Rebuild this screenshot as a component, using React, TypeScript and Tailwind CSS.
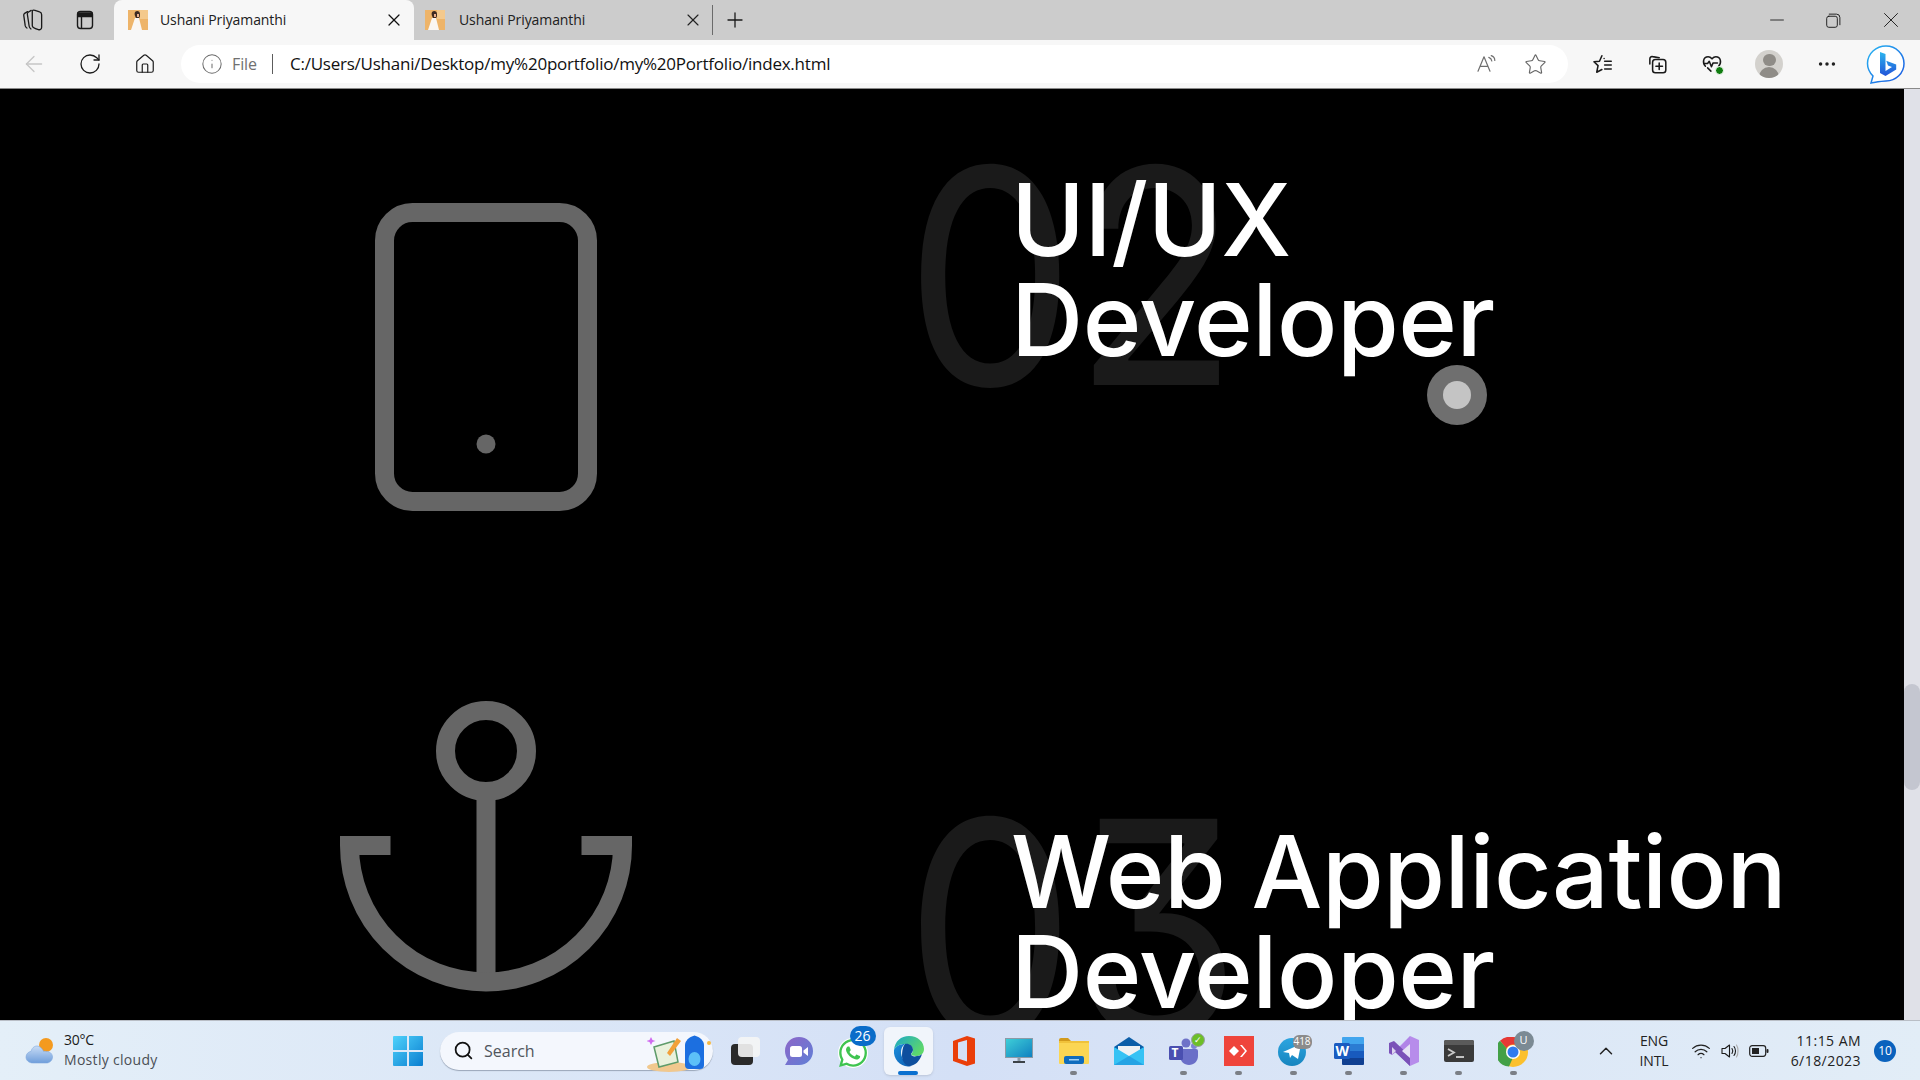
import React from "react";
import { ArrowLeft, RotateCw, Home, Info, Star, Plus, X, Minus, ChevronUp, Wifi, MoreHorizontal, Search } from "lucide-react";
import { SiWhatsapp } from "react-icons/si";

const Favicon = () => (
  <svg width="20" height="20" viewBox="0 0 20 20" className="shrink-0">
    <rect width="20" height="20" fill="#eeb469" />
    <rect x="12" width="8" height="9" fill="#f4c98c" />
    <path d="M7 2c2-2 5-1 5 2 0 2 0 3-1 4l-3 0C7 6 6 4 7 2z" fill="#3d2a22" />
    <path d="M9 4h2v3H9z" fill="#e9b08c" />
    <path d="M7 8h4l3 12H3z" fill="#faf6f2" />
  </svg>
);

const Slot = ({ className, children }: { className: string; children?: React.ReactNode }) => (
  <div className={`flex items-center justify-center shrink-0 ${className}`}>{children}</div>
);

const S = ({ children, size = 20, stroke = "#1a1a1a", sw = 1.2 }: { children: React.ReactNode; size?: number; stroke?: string; sw?: number }) => (
  <svg width={size} height={size} viewBox="0 0 20 20" fill="none" stroke={stroke} strokeWidth={sw} strokeLinecap="round" strokeLinejoin="round">
    {children}
  </svg>
);

const TabBar = () => (
  <div className="flex h-10 bg-[#cccccc] shrink-0 items-stretch">
    <Slot className="w-[64px] pl-[2px]">
      <S size={24} sw={1.1}>
        <path d="M5.500 3 3 4.500c-.6.4-.8 1-.7 1.700l1.200 8.500c.2 1 .6 1.500 1.400 2" />
        <path d="M8.500 2 6 3.500c-.6.4-.8 1-.7 1.700l1.500 10c.2 1.200.7 1.800 1.500 2.300" />
        <path d="M11 1.800l4.500 1.500c1 .3 1.700 1.200 1.700 2.300V16c0 1.500-1.200 2.500-2.700 2-2-.6-3.300-1.200-4.200-1.800-.6-.4-.9-1-.9-1.700V3c0-.9.800-1.500 1.600-1.200z" />
      </S>
    </Slot>
    <Slot className="w-[42px]">
      <S size={20} sw={1.4}>
        <rect x="2.500" y="1.500" width="15" height="17" rx="3" />
        <path d="M3 3h14v3.500H3z" fill="#1a1a1a" />
        <path d="M6.500 6.500v11.500" />
      </S>
    </Slot>
    <div className="w-[8px]" />
    <div className="w-[300px] bg-[#f7f7f7] rounded-t-lg flex items-center pl-[14px] pr-[10px]">
      <Favicon />
      <span className="ml-3 flex-1 text-[14px] text-[#202020] font-['Open_Sans',sans-serif] tracking-[-0.1px] -mt-[2px]">Ushani Priyamanthi</span>
      <X size={20} color="#111" strokeWidth={1.5} />
    </div>
    <div className="w-[298px] flex items-center pl-[11px] pr-[9px]">
      <Favicon />
      <span className="ml-[14px] flex-1 text-[14px] text-[#202020] font-['Open_Sans',sans-serif] tracking-[-0.1px] -mt-[2px]">Ushani Priyamanthi</span>
      <X size={20} color="#222" strokeWidth={1.4} />
    </div>
    <div className="w-px h-[30px] bg-[#6b6b6b] self-center" />
    <Slot className="w-[44px]"><Plus size={24} color="#1a1a1a" strokeWidth={1.3} /></Slot>
    <div className="flex-1" />
    <Slot className="w-[57px]"><Minus size={22} color="#222" strokeWidth={1} /></Slot>
    <Slot className="w-[57px]">
      <S size={17} sw={1.1}>
        <rect x="2" y="5" width="12.500" height="13" rx="2.500" />
        <path d="M5 2.500h8.500a4 4 0 0 1 4 4v8.500" />
      </S>
    </Slot>
    <Slot className="w-[58px]"><X size={26} color="#222" strokeWidth={0.9} /></Slot>
  </div>
);

const Bing = () => (
  <svg width="40" height="40" viewBox="0 0 40 40">
    <defs>
      <linearGradient id="bg1" x1="0" y1="0" x2="1" y2="1"><stop offset="0" stopColor="#27b6f2" /><stop offset="1" stopColor="#1a56e0" /></linearGradient>
      <linearGradient id="bg2" x1="0" y1="0" x2="0" y2="1"><stop offset="0" stopColor="#2cb5ee" /><stop offset="1" stopColor="#2253d8" /></linearGradient>
    </defs>
    <path d="M20 2c10 0 18 8 18 17.500S30 37 20 37c-4 0-9 1-15 2l2-7C3 28 1.500 24 1.500 19.500 1.500 9.500 10 2 20 2z" fill="#fff" stroke="url(#bg1)" strokeWidth="1.500" />
    <path d="M14 8l5.500 2v17l6.500-4-4-1.500-1.800-4.800 10 3.800v5L19.500 32 14 29z" fill="url(#bg2)" />
  </svg>
);

const AddressBar = () => (
  <div className="flex h-[49px] shrink-0 items-center bg-[#f7f7f7] border-b border-[#8a8a8a] pl-[6px]">
    <Slot className="w-[56px]"><ArrowLeft size={26} color="#c6c6c6" strokeWidth={1.2} /></Slot>
    <Slot className="w-[55px]"><RotateCw size={24} color="#1c1c1c" strokeWidth={1.3} /></Slot>
    <Slot className="w-[55px]"><Home size={22} color="#1c1c1c" strokeWidth={1.3} /></Slot>
    <div className="ml-[9px] w-[1387px] h-[38px] rounded-full bg-white flex items-center pl-[20px] shrink-0">
      <Info size={22} color="#6b6b6b" strokeWidth={1.1} />
      <span className="ml-[9px] text-[16px] text-[#707070] font-['Open_Sans',sans-serif] tracking-[-0.1px]">File</span>
      <div className="ml-[15px] w-px h-[20px] bg-[#5c5c5c]" />
      <span className="ml-[17px] text-[17px] text-[#111] font-['Open_Sans',sans-serif] tracking-[-0.23px] whitespace-nowrap">C:/Users/Ushani/Desktop/my%20portfolio/my%20Portfolio/index.html</span>
      <div className="flex-1" />
      <S size={24} stroke="#6f6f6f" sw={1}>
        <path d="M2.500 16 7.500 4l5 12M4.500 12h6" />
        <path d="M11.500 4.500c1.500.5 2.300 1.500 2.500 3M13.500 3c1.500.5 3 2 3 4" />
      </S>
      <div className="ml-[25px] mr-[21px]"><Star size={23} color="#666" strokeWidth={1.2} /></div>
    </div>
    <Slot className="w-[55px] ml-[7px]">
      <S size={22} sw={1.4}>
        <path d="M9 2.500 6.800 7.500l-5 .5L5.500 11.500l-1.200 6 4.700-2.500M11 5h0M11.500 7.500h6M11.500 11h6M11.500 14.500h6" />
      </S>
    </Slot>
    <Slot className="w-[54px]">
      <S size={22} sw={1.4}>
        <path d="M3.500 10V5.500c0-1.500 1-2.500 2.500-2.200l6 1" />
        <rect x="6" y="6" width="12" height="12" rx="2.500" />
        <path d="M12 9v6M9 12h6" />
      </S>
    </Slot>
    <Slot className="w-[55px] relative">
      <S size={22} sw={1.4}>
        <path d="M4 12C1 9 2 3.500 6.500 3.500c1.500 0 2.500.7 3.500 1.800 1-1.100 2-1.800 3.500-1.800 4.500 0 5.500 5.500 2.500 8.500" />
        <path d="M2.500 9.500h3.500l1.500-2 2 5 1.500-3.500h3l1 0M6 13.500l3 3" />
      </S>
      <div className="absolute left-[31px] top-[13px] w-[9px] h-[9px] rounded-full bg-[#107c10] border border-white" />
    </Slot>
    <Slot className="w-[60px]">
      <div className="w-7 h-7 rounded-full bg-[#d3d1cd] flex flex-col items-center overflow-hidden">
        <div className="w-[13px] h-[13px] rounded-full bg-[#8f8c87] mt-[4px]" />
        <div className="w-[20px] h-[12px] rounded-t-full bg-[#8f8c87] mt-[1px]" />
      </div>
    </Slot>
    <Slot className="w-[56px]"><MoreHorizontal size={22} color="#222" strokeWidth={1.8} /></Slot>
    <Slot className="w-[62px]"><Bing /></Slot>
  </div>
);

const PhoneIcon = () => (
  <svg width="222" height="308" viewBox="0 0 222 308" className="ml-[375px] shrink-0">
    <rect x="9.500" y="9.500" width="203" height="289" rx="28" fill="none" stroke="#666" strokeWidth="19" />
    <circle cx="111" cy="241" r="9.500" fill="#666" />
  </svg>
);

const AnchorIcon = () => (
  <svg width="292" height="292" viewBox="0 0 292 292" className="ml-[340px] mt-[189px] shrink-0">
    <g fill="none" stroke="#666" strokeWidth="19">
      <circle cx="146" cy="51" r="40.500" />
      <path d="M146 91V282" />
      <path d="M50.500 145.500H9.500a136.500 136.500 0 0 0 273 0H241.500" />
    </g>
  </svg>
);

const Service = ({ num, lines }: { num: string; lines: string[] }) => (
  <div className="relative h-[652px] shrink-0 pl-[111px] pt-[81px]">
    <div className="absolute left-[5px] -top-[1px] origin-left scale-x-[0.9] text-[300px] leading-[1.25] text-[#1a1a1a] font-['Inter',sans-serif] font-normal tracking-[-2px] [font-feature-settings:'cv09'] select-none">{num}</div>
    <div className="relative text-[100px] leading-[100px] text-white font-['Inter',sans-serif] font-medium tracking-[-0.5px] whitespace-nowrap">
      {lines.map((l) => <div key={l}>{l}</div>)}
    </div>
  </div>
);

const Main = () => (
  <div className="flex-1 min-h-0 flex">
    <div className="relative flex-1 bg-black overflow-hidden flex">
      <div className="w-[900px] shrink-0 pt-[114px] flex flex-col">
        <PhoneIcon />
        <AnchorIcon />
      </div>
      <div className="flex-1 flex flex-col">
        <Service num="02" lines={["UI/UX", "Developer"]} />
        <Service num="03" lines={["Web Application", "Developer"]} />
      </div>
      <div className="absolute left-[1427px] top-[276px] w-[60px] h-[60px] rounded-full bg-[#6f6f6f] flex items-center justify-center">
        <div className="w-7 h-7 rounded-full bg-[#c4c4c4]" />
      </div>
    </div>
    <div className="w-4 shrink-0 bg-[#e0e1e8] pt-[595px]">
      <div className="h-[106px] rounded-lg bg-[#c4c6d0]" />
    </div>
  </div>
);

const TaskSlot = ({ children, dot, active }: { children: React.ReactNode; dot?: boolean; active?: boolean }) => (
  <div className="relative w-[55px] h-[60px] shrink-0 flex items-center justify-center">
    {active && <div className="absolute left-[3px] top-[6px] w-[49px] h-[48px] rounded-md bg-[#f1f5fb] shadow-sm" />}
    <div className="relative">{children}</div>
    {dot && <div className="absolute left-[24px] top-[50px] w-[7px] h-[4px] rounded-full bg-[#7b7f86]" />}
    {active && <div className="absolute left-[17px] top-[50px] w-5 h-1 rounded-full bg-[#0a70d0]" />}
  </div>
);

const Badge = ({ className, children }: { className: string; children: React.ReactNode }) => (
  <div className={`absolute flex items-center justify-center rounded-full text-white font-['Open_Sans',sans-serif] ${className}`}>{children}</div>
);

const Taskbar = () => (
  <div className="h-[60px] shrink-0 flex items-center border-t border-[#b9bec6] bg-gradient-to-r from-[#e4eff8] via-[#d4e0f6] to-[#e2edf7]">
    <div className="w-[386px] shrink-0 flex items-center pl-[25px]">
      <svg width="32" height="30" viewBox="0 0 32 30">
        <defs><linearGradient id="cl" x1="0" y1="0" x2="0" y2="1"><stop offset="0" stopColor="#c8dcf5" /><stop offset="1" stopColor="#6f9edb" /></linearGradient></defs>
        <circle cx="21" cy="9" r="7" fill="#f49a1f" />
        <path d="M8 27c-4 0-7-2.500-7-6 0-3 2.500-5.500 5-5.500C7 11 11 9 14 10.500c2.500 1 4 3 4.500 5 .5 0 1.500-.5 3 0 3 0 6 2 6 5.500s-3 6-6 6z" fill="url(#cl)" stroke="#7fa8de" strokeWidth=".6" />
      </svg>
      <div className="ml-[7px] font-['Open_Sans',sans-serif] text-[14px] leading-[20px] -mt-[2px]">
        <div className="text-[#1a1a1a] tracking-[-0.25px]">30°C</div>
        <div className="text-[#4b4f55] tracking-[0.3px]">Mostly cloudy</div>
      </div>
    </div>
    <Slot className="w-[44px]">
      <svg width="30" height="30" viewBox="0 0 30 30">
        <defs><linearGradient id="wn" x1="0" y1="0" x2="1" y2="1"><stop offset="0" stopColor="#4fd2fb" /><stop offset="1" stopColor="#0a7ed0" /></linearGradient></defs>
        <path d="M0 1a1 1 0 0 1 1-1h13v14H0zM16 0h13a1 1 0 0 1 1 1v13H16zM0 16h14v14H1a1 1 0 0 1-1-1zM16 16h14v13a1 1 0 0 1-1 1H16z" fill="url(#wn)" />
      </svg>
    </Slot>
    <div className="ml-[10px] w-[273px] h-[38px] rounded-full bg-[#f4f7fd] shadow-[0_1px_1px_#9aa6b8] flex items-center pl-[13px] relative shrink-0">
      <Search size={21} color="#111" strokeWidth={2} />
      <span className="ml-[10px] text-[16px] text-[#50555c] font-['Open_Sans',sans-serif] tracking-[0px]">Search</span>
      <svg width="66" height="44" viewBox="0 0 66 44" className="absolute right-0 -top-[3px]">
        <path d="M4 8l1.500 3 3 1-3 1L4 16l-1.500-3-3-1 3-1z" fill="#d06bf0" />
        <ellipse cx="22" cy="38" rx="22" ry="5" fill="#f1c88e" />
        <path d="M7 18l20-6 4 21-19 5z" fill="#e9f1dc" stroke="#5e9b6a" strokeWidth="1.500" />
        <path d="M20 24 30 9l4 3-11 15z" fill="#f2a13a" />
        <path d="M38 16c0-4 4-8 9.500-9.500C53 8 57 12 57 16v20a4 4 0 0 1-4 4H42a4 4 0 0 1-4-4z" fill="#1c6fe0" />
        <ellipse cx="47.500" cy="30" rx="6" ry="7" fill="#5cc0f8" />
        <circle cx="62" cy="14" r="2" fill="#f5b942" />
      </svg>
    </div>
    <div className="ml-[3px] flex shrink-0">
      <TaskSlot>
        <div className="relative w-[30px] h-[28px] ml-[4px]">
          <div className="absolute left-0 top-[7px] w-[22px] h-[21px] rounded-sm bg-[#2a2a2a]" />
          <div className="absolute left-[7px] top-0 w-[22px] h-[20px] rounded-sm bg-[#f5f5f5] opacity-90" />
        </div>
      </TaskSlot>
      <TaskSlot>
        <svg width="30" height="30" viewBox="0 0 30 30">
          <defs><linearGradient id="ch" x1="0" y1="0" x2="1" y2="1"><stop offset="0" stopColor="#8d66c8" /><stop offset="1" stopColor="#5f7fd6" /></linearGradient></defs>
          <path d="M15 1c8 0 14 6 14 14s-6 14-14 14H1l3-5C2 21 1 18 1 15 1 7 7 1 15 1z" fill="url(#ch)" />
          <rect x="6" y="10" width="12" height="11" rx="2.500" fill="#fff" />
          <path d="M19.500 14.500 24 11v9l-4.500-3.500z" fill="#fff" />
        </svg>
      </TaskSlot>
      <TaskSlot>
        <div className="relative w-[30px] h-[30px] rounded-full bg-white flex items-center justify-center mt-[4px] -ml-[2px]">
          <SiWhatsapp size={28} color="#3fc450" />
          <Badge className="left-[12px] -top-[12px] w-[26px] h-[20px] bg-[#0a6cc9] text-[14px]">26</Badge>
        </div>
      </TaskSlot>
      <TaskSlot active>
        <svg width="32" height="32" viewBox="0 0 32 32">
          <defs>
            <linearGradient id="ed1" x1="0" y1="0" x2="1" y2=".6"><stop offset="0" stopColor="#1aa7c8" /><stop offset="1" stopColor="#5fd86a" /></linearGradient>
            <linearGradient id="ed2" x1="0" y1="0" x2="1" y2="1"><stop offset="0" stopColor="#1c8fdc" /><stop offset="1" stopColor="#0c5bb0" /></linearGradient>
          </defs>
          <path d="M1 15C2 6 8 1 16 1c9 0 15 6 15 13 0 5-4 7-8 7-3 0-5-1-5-2 1-1 2-2 2-4 0-4-4-6-8-6-5 0-9 2-11 6z" fill="url(#ed1)" />
          <path d="M1 15c2-4 6-6 11-6-4 3-5 8-3 13 1 3 5 7 10 9-1 0-2 .5-4 .5C7 31 0 24 1 15z" fill="url(#ed2)" />
          <path d="M12 9c3-1 8 1 8 6 0 2-2 3-2 4 0 2 3 3 6 2 2 0 4-1 5-2-2 7-7 12-13 12-4-1-7-5-7-10 0-5 1-10 3-12z" fill="#0e4f9e" />
        </svg>
      </TaskSlot>
      <TaskSlot>
        <svg width="24" height="30" viewBox="0 0 24 30">
          <path d="M1 5 15 0l8 2.500v25L15 30 1 25zM15 4 6 6.500v16l9 3z" fill="#ea3e09" fillRule="evenodd" />
        </svg>
      </TaskSlot>
      <TaskSlot>
        <svg width="28" height="26" viewBox="0 0 28 26">
          <defs><linearGradient id="mo" x1="0" y1="0" x2="1" y2="1"><stop offset="0" stopColor="#3fd0d8" /><stop offset="1" stopColor="#0f7fc0" /></linearGradient></defs>
          <rect x=".5" y=".5" width="27" height="19" fill="url(#mo)" stroke="#8c9aa6" />
          <rect x="12.500" y="20" width="3" height="3" fill="#8c9aa6" />
          <rect x="8" y="23" width="12" height="2" fill="#3c4248" />
        </svg>
      </TaskSlot>
      <TaskSlot dot>
        <svg width="30" height="26" viewBox="0 0 30 26">
          <path d="M0 2a2 2 0 0 1 2-2h7l3 3h-12z" fill="#d29a1c" />
          <rect y="3" width="30" height="23" rx="1" fill="#fbd653" />
          <rect y="3" width="30" height="2" fill="#f0c23a" />
          <rect x="5" y="18" width="20" height="8" rx="2" fill="#0f6cbd" />
          <rect x="10" y="21" width="10" height="1.500" fill="#9fd0f5" />
        </svg>
      </TaskSlot>
      <TaskSlot>
        <svg width="30" height="28" viewBox="0 0 30 28">
          <path d="M0 10 15 0l15 10v18H0z" fill="#0c5ea8" />
          <path d="M4 9h22v6L15 20 4 15z" fill="#eef1f4" />
          <path d="M0 10l15 9 15-9v18H0z" fill="#36c2f4" />
          <path d="M0 28l15-9 15 9z" fill="#1a8ed8" opacity=".6" />
        </svg>
      </TaskSlot>
      <TaskSlot dot>
        <div className="relative">
          <svg width="30" height="28" viewBox="0 0 30 28">
            <circle cx="17" cy="6" r="4.500" fill="#6e72c8" />
            <circle cx="25" cy="9" r="3" fill="#7b83d6" />
            <path d="M11 12h16a2 2 0 0 1 2 2v5c0 5-4 9-9 9s-9-4-9-9z" fill="#6a6fc8" />
            <rect y="9" width="14" height="14" rx="1.500" fill="#4a4fb0" />
          </svg>
          <span className="absolute left-[3px] top-[9px] text-[12px] leading-[14px] text-white font-bold font-['Open_Sans',sans-serif]">T</span>
          <Badge className="left-[22px] -top-[4px] w-[14px] h-[14px] bg-[#6cbf28] border border-[#9aa0a8] text-[9px]">✓</Badge>
        </div>
      </TaskSlot>
      <TaskSlot dot>
        <div className="w-[30px] h-[30px] bg-[#ef443b] flex items-center justify-center">
          <svg width="20" height="12" viewBox="0 0 20 12">
            <path d="M0 6l5-5 5 5-5 5z" fill="#fff" />
            <path d="M11 0h2l5 6-5 6h-2l5-6z" fill="#fff" />
          </svg>
        </div>
      </TaskSlot>
      <TaskSlot dot>
        <div className="relative w-[28px] h-[28px] rounded-full bg-gradient-to-b from-[#2ca5e0] to-[#1785bf] flex items-center justify-center -ml-[4px] mt-[2px]">
          <svg width="18" height="16" viewBox="0 0 18 16"><path d="M0 8 18 0l-3 15-6-4-2 3-1-5z" fill="#fff" /></svg>
          <Badge className="left-[15px] -top-[3px] !rounded-md w-[19px] h-[14px] bg-[#8b8b8b] text-[10px]">418</Badge>
        </div>
      </TaskSlot>
      <TaskSlot dot>
        <div className="relative">
          <svg width="30" height="28" viewBox="0 0 30 28">
            <path d="M8 1a1 1 0 0 1 1-1h20a1 1 0 0 1 1 1v6H8z" fill="#41a5ee" />
            <rect x="8" y="7" width="22" height="7" fill="#2b7cd3" />
            <rect x="8" y="14" width="22" height="7" fill="#185abd" />
            <path d="M8 21h22v6a1 1 0 0 1-1 1H9a1 1 0 0 1-1-1z" fill="#103f91" />
            <rect y="6" width="16" height="16" rx="1.500" fill="#1a5bc0" />
          </svg>
          <span className="absolute left-[2px] top-[6px] text-[14px] leading-[16px] text-white font-bold font-['Open_Sans',sans-serif]">W</span>
        </div>
      </TaskSlot>
      <TaskSlot dot>
        <svg width="30" height="30" viewBox="0 0 30 30">
          <path d="M21 0l9 4v22l-9 4L7 16l-4 3-3-1.500v-5L3 11l4 3z" fill="#b78ceb" />
          <path d="M21 0v30L7 16z" fill="#a677e0" opacity=".4" />
          <path d="M0 7l5-2 16 15v10L6 16l-3 2.500-3-1.500z" fill="#7a52b8" />
          <path d="M21 8 13 15l8 7z" fill="#e4e2f5" />
          <path d="M3 11l4 4-4 3.500z" fill="#dcd6ee" />
        </svg>
      </TaskSlot>
      <TaskSlot dot>
        <svg width="30" height="22" viewBox="0 0 30 22">
          <rect width="30" height="22" rx="2" fill="#3a3a3a" />
          <path d="M0 2a2 2 0 0 1 2-2h26a2 2 0 0 1 2 2v3H0z" fill="#5a5a5a" />
          <path d="M4 9l6 3.500-6 3.500" fill="none" stroke="#c9c9c9" strokeWidth="1.800" />
          <path d="M12 17h8" stroke="#e5e5e5" strokeWidth="1.600" />
        </svg>
      </TaskSlot>
      <TaskSlot dot>
        <div className="relative -ml-[2px] mt-[2px]">
          <svg width="30" height="30" viewBox="0 0 30 30">
            <circle cx="15" cy="15" r="15" fill="#fbc02d" />
            <path d="M15 0a15 15 0 0 1 13 7.500H15a7.500 7.500 0 0 0-6.500 3.800L2 3.800A15 15 0 0 1 15 0z" fill="#e53935" transform="translate(0 0)" />
            <path d="M2 3.800A15 15 0 0 0 11 29.500l4-9A7.500 7.500 0 0 1 8.500 11.300z" fill="#43a047" />
            <circle cx="15" cy="15" r="7" fill="#fff" />
            <circle cx="15" cy="15" r="5.500" fill="#2f7bf0" />
          </svg>
          <Badge className="left-[16px] -top-[6px] w-5 h-5 bg-[#7b8a94] text-[11px]">U</Badge>
        </div>
      </TaskSlot>
    </div>
    <Slot className="w-[42px] ml-[44px]"><ChevronUp size={22} color="#222" strokeWidth={1.6} /></Slot>
    <div className="w-[48px] ml-[3px] text-center text-[14px] leading-[20px] text-[#222] font-['Open_Sans',sans-serif] tracking-[-0.1px] shrink-0">
      <div>ENG</div>
      <div>INTL</div>
    </div>
    <Slot className="w-[30px] ml-[8px]"><Wifi size={20} color="#222" strokeWidth={1.5} /></Slot>
    <Slot className="w-[28px]">
      <S size={20} sw={1.1}>
        <path d="M2 7.500v5h3l4.500 3.500V4L5 7.500zM12 7.500c1 1.500 1 3.500 0 5M14 5.500c2 2.500 2 6.500 0 9" />
        <path d="M16.500 4c2 3 2 9 0 12" stroke="#aaa" />
      </S>
    </Slot>
    <Slot className="w-[30px]">
      <svg width="20" height="12" viewBox="0 0 20 12">
        <rect x=".7" y=".7" width="16" height="10.600" rx="2.500" fill="none" stroke="#222" strokeWidth="1.200" />
        <rect x="3" y="3" width="7" height="6" fill="#222" />
        <rect x="17.500" y="4" width="2" height="4" rx="1" fill="#222" />
      </svg>
    </Slot>
    <div className="w-[85px] ml-[2px] text-right text-[14px] leading-[20px] text-[#222] font-['Open_Sans',sans-serif] tracking-[0.45px] shrink-0 whitespace-nowrap">
      <div>11:15 AM</div>
      <div>6/18/2023</div>
    </div>
    <div className="ml-[13px] w-[22px] h-[22px] rounded-full bg-[#0a62bd] text-white text-[12px] flex items-center justify-center font-['Open_Sans',sans-serif] shrink-0">10</div>
  </div>
);

export default function App() {
  return (
    <div className="w-[1920px] h-[1080px] flex flex-col overflow-hidden bg-black">
      <TabBar />
      <AddressBar />
      <Main />
      <Taskbar />
    </div>
  );
}
